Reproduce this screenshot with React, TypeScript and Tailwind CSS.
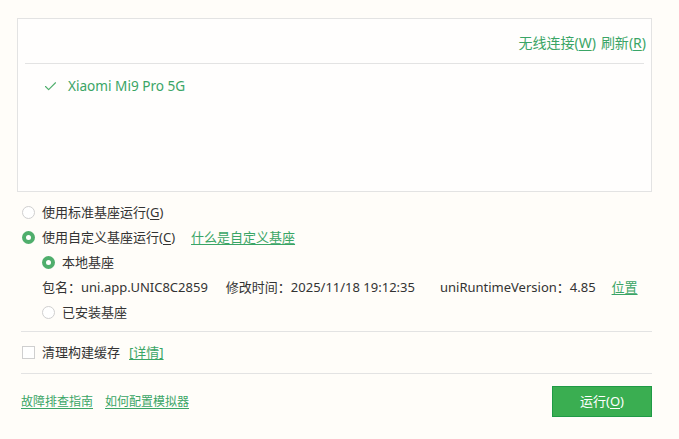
import { Check } from 'lucide-react';

const font = "font-['Segoe_UI','Noto_Sans','Noto_Sans_CJK_SC',sans-serif]";

const Radio = ({ checked }: { checked?: boolean }) =>
  checked ? (
    <span className="w-[13px] h-[13px] rounded-full bg-[#4fae6c] flex items-center justify-center shrink-0">
      <span className="w-[5px] h-[5px] rounded-full bg-white" />
    </span>
  ) : (
    <span className="w-[13px] h-[13px] rounded-full border border-[#cfcfcf] bg-white shrink-0" />
  );

const Hotkey = ({ k }: { k: string }) => (
  <>
    (<span className="underline underline-offset-2">{k}</span>)
  </>
);

const App = () => {
  return (
    <div className={`min-h-screen bg-[#fffdf9] text-[13px] text-[#333] ${font} pt-[18px] pl-[17px] pr-[27px]`}>
      {/* device list */}
      <div className="h-[174px] border border-[#e3e3e3] bg-[#fffefd]">
        <div className="flex justify-end gap-[5px] pt-[15px] pr-[5px] h-[36px] text-[14px] leading-[18px] text-[#3aa566]">
          <span>
            无线连接<Hotkey k="W" />
          </span>
          <span>
            刷新<Hotkey k="R" />
          </span>
        </div>
        <div className="mx-[7px] mt-[8px] border-t border-[#e3e3e3]" />
        <div className="flex items-center h-[44px] pl-[25px] gap-[10px] text-[13.6px] text-[#3aa566]">
          <Check size={15} strokeWidth={1.8} className="text-[#4fae6c]" />
          <span>Xiaomi Mi9 Pro 5G</span>
        </div>
      </div>

      {/* base options */}
      <div className="mt-[8px] pl-[5px]">
        <div className="flex items-center h-[25px] gap-[7px]">
          <Radio />
          <span>
            使用标准基座运行<Hotkey k="G" />
          </span>
        </div>
        <div className="flex items-center h-[25px] gap-[7px]">
          <Radio checked />
          <span>
            使用自定义基座运行<Hotkey k="C" />
          </span>
          <span className="ml-[9px] text-[#3aa566] underline underline-offset-2">什么是自定义基座</span>
        </div>
        <div className="pl-[20px]">
          <div className="flex items-center h-[25px] gap-[7px]">
            <Radio checked />
            <span>本地基座</span>
          </div>
          <div className="flex items-center h-[25px] whitespace-pre">
            <span>包名：uni.app.UNIC8C2859</span>
            <span className="ml-[18px]">修改时间：2025/11/18 19:12:35</span>
            <span className="ml-[25px]">uniRuntimeVersion：4.85</span>
            <span className="ml-[16px] text-[#3aa566] underline underline-offset-2">位置</span>
          </div>
          <div className="flex items-center h-[25px] gap-[7px]">
            <Radio />
            <span>已安装基座</span>
          </div>
        </div>
      </div>

      <div className="ml-[4px] mt-[6px] border-t border-[#e3e3e3]" />

      <div className="flex items-center h-[41px] pl-[5px] gap-[7px]">
        <span className="w-[13px] h-[13px] border border-[#cfcfcf] bg-white shrink-0" />
        <span>清理构建缓存</span>
        <span className="ml-[2px] text-[#3aa566] underline underline-offset-2">[详情]</span>
      </div>

      <div className="ml-[4px] border-t border-[#e3e3e3]" />

      <div className="flex items-center justify-between mt-[12px] pl-[4px]">
        <div className="flex gap-[12px] text-[12px] text-[#3aa566]">
          <span className="underline underline-offset-2">故障排查指南</span>
          <span className="underline underline-offset-2">如何配置模拟器</span>
        </div>
        <button className="w-[100px] h-[31px] bg-[#3aae51] border border-[#1f9a46] text-white text-[13px]">
          运行<Hotkey k="O" />
        </button>
      </div>
    </div>
  );
};

export default App;
